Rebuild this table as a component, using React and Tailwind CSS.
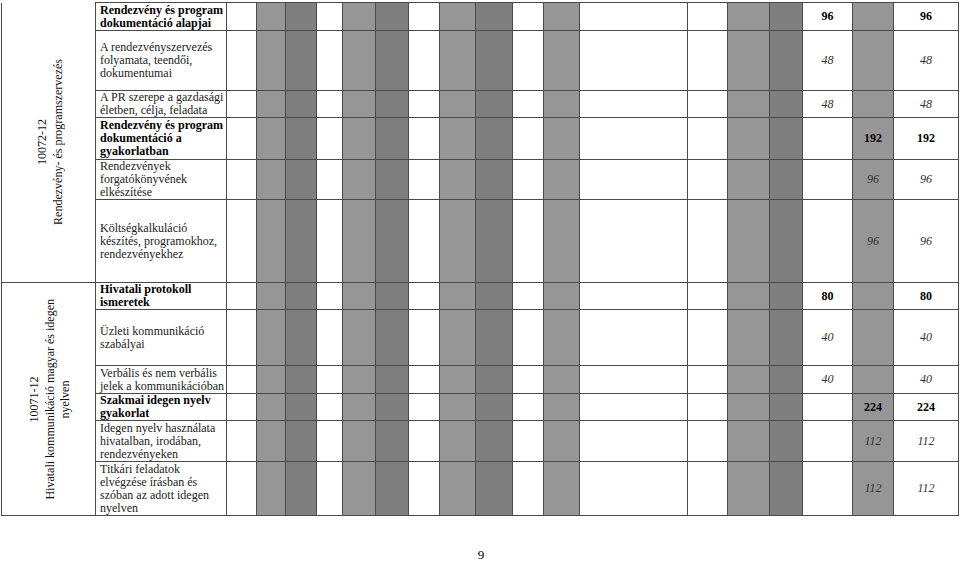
const cols = [
  { w: 94 },
  { w: 131 },
  { w: 30, bg: "white" },
  { w: 29, bg: "light" },
  { w: 31, bg: "dark" },
  { w: 26, bg: "white" },
  { w: 33, bg: "light" },
  { w: 33, bg: "dark" },
  { w: 31, bg: "white" },
  { w: 36, bg: "light" },
  { w: 37, bg: "dark" },
  { w: 31, bg: "white" },
  { w: 36, bg: "light" },
  { w: 108, bg: "white" },
  { w: 40, bg: "white" },
  { w: 42, bg: "light" },
  { w: 33, bg: "dark" },
  { w: 50, bg: "white" },
  { w: 41, bg: "light" },
  { w: 65, bg: "white" },
];

const rows = [
  { h: 28, text: "Rendezvény és program dokumentáció alapjai", bold: true, a: "96", b: "96", at: 17 },
  { h: 60, text: "A rendezvényszervezés folyamata, teendői, dokumentumai", a: "48", b: "48", at: 17 },
  { h: 27, text: "A PR szerepe a gazdasági életben, célja, feladata", a: "48", b: "48", at: 17 },
  { h: 42, text: "Rendezvény és program dokumentáció a gyakorlatban", bold: true, a: "192", b: "192", at: 18 },
  { h: 40, text: "Rendezvények forgatókönyvének elkészítése", a: "96", b: "96", at: 18 },
  { h: 83, text: "Költségkalkuláció készítés, programokhoz, rendezvényekhez", a: "96", b: "96", at: 18 },
  { h: 27, text: "Hivatali protokoll ismeretek", bold: true, a: "80", b: "80", at: 17 },
  { h: 56, text: "Üzleti kommunikáció szabályai", a: "40", b: "40", at: 17 },
  { h: 28, text: "Verbális és nem verbális jelek a kommunikációban", a: "40", b: "40", at: 17 },
  { h: 27, text: "Szakmai idegen nyelv gyakorlat", bold: true, a: "224", b: "224", at: 18 },
  { h: 41, text: "Idegen nyelv használata hivatalban, irodában, rendezvényeken", a: "112", b: "112", at: 18 },
  { h: 54, text: "Titkári feladatok elvégzése írásban és szóban az adott idegen nyelven", a: "112", b: "112", at: 18 },
];

const bgClass = {
  white: "bg-white",
  light: "bg-[#969696]",
  dark: "bg-[#7f7f7f]",
};

function Num({ value, bold }) {
  return (
    <span className={bold ? "font-bold not-italic" : "italic text-[#333]"}>{value}</span>
  );
}

function ModuleCell({ lines, span, first }) {
  return (
    <td
      rowSpan={span}
      className={`border border-[#4a4a4a] align-middle ${first ? "border-t-0" : ""}`}
    >
      <div className="flex items-center justify-center pl-[3px]">
        <div className="[writing-mode:vertical-rl] rotate-180 whitespace-nowrap text-center text-[12px] leading-[15.5px] text-[#111]">
          {lines.map((l, i) => (
            <div key={i}>{l}</div>
          ))}
        </div>
      </div>
    </td>
  );
}

export default function App() {
  return (
    <div
      className="w-[960px] h-[561px] bg-white overflow-hidden text-black"
      style={{ fontFamily: '"Liberation Serif", "Times New Roman", serif' }}
    >
      <table className="table-fixed border-collapse w-[958px] ml-[1px] mt-[2px]">
        <colgroup>
          {cols.map((c, i) => (
            <col key={i} style={{ width: c.w }} />
          ))}
        </colgroup>
        <tbody>
          {rows.map((r, ri) => (
            <tr key={ri} style={{ height: r.h }}>
              {ri === 0 && (
                <ModuleCell
                  first
                  span={6}
                  lines={["10072-12", "Rendezvény- és programszervezés"]}
                />
              )}
              {ri === 6 && (
                <ModuleCell
                  span={6}
                  lines={["10071-12", "Hivatali kommunikáció magyar és idegen", "nyelven"]}
                />
              )}
              <td
                className={`border border-[#4a4a4a] align-middle pl-[4px] pr-[2px] text-[12px] leading-[13px] ${
                  r.bold ? "font-bold" : "text-[#222]"
                }`}
              >
                {r.text}
              </td>
              {cols.slice(2).map((c, ci) => {
                const idx = ci + 2;
                let content = null;
                if (idx === r.at) content = <Num value={r.a} bold={r.bold} />;
                if (idx === 19) content = <Num value={r.b} bold={r.bold} />;
                return (
                  <td
                    key={idx}
                    className={`border border-[#4a4a4a] align-middle text-center text-[12px] leading-[13px] ${bgClass[c.bg]}`}
                  >
                    {content}
                  </td>
                );
              })}
            </tr>
          ))}
        </tbody>
      </table>
      <div className="mt-[32px] text-center text-[13px] leading-[14px] pl-[2px]">9</div>
    </div>
  );
}
